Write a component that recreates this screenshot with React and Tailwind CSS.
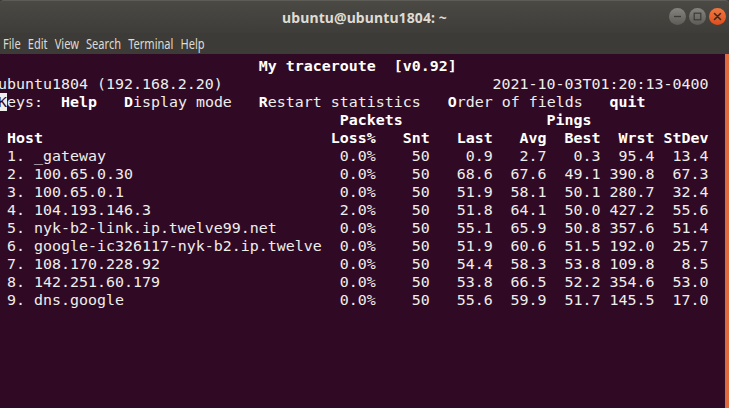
const mono = { fontFamily: '"DejaVu Sans Mono", "Liberation Mono", monospace' }

const hops = [
  ['1', '_gateway', '0.0%', '50', '0.9', '2.7', '0.3', '95.4', '13.4'],
  ['2', '100.65.0.30', '0.0%', '50', '68.6', '67.6', '49.1', '390.8', '67.3'],
  ['3', '100.65.0.1', '0.0%', '50', '51.9', '58.1', '50.1', '280.7', '32.4'],
  ['4', '104.193.146.3', '2.0%', '50', '51.8', '64.1', '50.0', '427.2', '55.6'],
  ['5', 'nyk-b2-link.ip.twelve99.net', '0.0%', '50', '55.1', '65.9', '50.8', '357.6', '51.4'],
  ['6', 'google-ic326117-nyk-b2.ip.twelve', '0.0%', '50', '51.9', '60.6', '51.5', '192.0', '25.7'],
  ['7', '108.170.228.92', '0.0%', '50', '54.4', '58.3', '53.8', '109.8', '8.5'],
  ['8', '142.251.60.179', '0.0%', '50', '53.8', '66.5', '52.2', '354.6', '53.0'],
  ['9', 'dns.google', '0.0%', '50', '55.6', '59.9', '51.7', '145.5', '17.0'],
]

// mtr column layout: host 36, then right-aligned fields
const cols = (a) =>
  a[0].padEnd(36) +
  a[1].padStart(6) +
  a[2].padStart(6) +
  a[3].padStart(7) +
  a[4].padStart(6) +
  a[5].padStart(6) +
  a[6].padStart(6) +
  a[7].padStart(6)

const B = ({ children }) => <span className="font-bold text-white">{children}</span>

const Line = ({ children }) => <div className="h-[18px] leading-[18px] whitespace-pre">{children}</div>

const WinButton = ({ kind }) => {
  if (kind === 'close') {
    return (
      <div className="w-[17px] h-[17px] rounded-full bg-gradient-to-b from-[#f0773f] to-[#df4e1c] flex items-center justify-center">
        <svg width="9" height="9" viewBox="0 0 9 9">
          <path d="M1.5 1.5 L7.5 7.5 M7.5 1.5 L1.5 7.5" stroke="#3a2a22" strokeWidth="1.6" strokeLinecap="round" />
        </svg>
      </div>
    )
  }
  return (
    <div className="w-[17px] h-[17px] rounded-full bg-gradient-to-b from-[#85847e] to-[#5d5c57] flex items-center justify-center">
      <svg width="9" height="9" viewBox="0 0 9 9">
        {kind === 'min' ? (
          <path d="M1 4.5 H8" stroke="#3c3b37" strokeWidth="1.3" />
        ) : (
          <rect x="1.2" y="1.2" width="6.6" height="6.6" fill="none" stroke="#3c3b37" strokeWidth="1.2" />
        )}
      </svg>
    </div>
  )
}

export default function App() {
  return (
    <div className="w-[729px] h-[408px] flex flex-col bg-[#3c3b37] overflow-hidden">
      <div className="h-[33px] relative flex items-center justify-center bg-gradient-to-b from-[#4a4944] to-[#3e3d39] border-t border-[#5d5c57] rounded-t-[4px]">
        <span
          className="text-[14px] font-bold text-[#dfdbd2] tracking-[0.1px]"
          style={{ fontFamily: '"Noto Sans", "Open Sans", sans-serif' }}
        >
          ubuntu@ubuntu1804: ~
        </span>
        <div className="absolute right-[3px] top-[7px] flex gap-[3px]">
          <WinButton kind="min" />
          <WinButton kind="max" />
          <WinButton kind="close" />
        </div>
      </div>
      <div className="h-[21px] flex items-center pl-[3px]">
        <div
          className="flex items-center gap-[9px] text-[14px] text-[#dfdbd2] origin-left scale-x-[0.79]"
          style={{ fontFamily: '"Noto Sans", "Open Sans", sans-serif' }}
        >
          <span>File</span>
          <span>Edit</span>
          <span>View</span>
          <span>Search</span>
          <span>Terminal</span>
          <span>Help</span>
        </div>
      </div>
      <div className="flex-1 flex">
        <div className="flex-1 bg-[#300a24] overflow-hidden pt-[3px]">
          <div className="-ml-[2px] text-[14.95px] text-[#eeeeec]" style={mono}>
            <Line>
              {' '.repeat(29)}
              <B>My traceroute  [v0.92]</B>
            </Line>
            <Line>{'ubuntu1804 (192.168.2.20)'.padEnd(55) + '2021-10-03T01:20:13-0400'}</Line>
            <Line>
              <span className="bg-[#eeeeec] text-[#300a24]">K</span>
              {'eys:  '}
              <B>Help</B>
              {'   '}
              <B>D</B>
              {'isplay mode   '}
              <B>R</B>
              {'estart statistics   '}
              <B>O</B>
              {'rder of fields   '}
              <B>quit</B>
            </Line>
            <Line>
              {' '.repeat(38)}
              <B>Packets</B>
              {' '.repeat(16)}
              <B>Pings</B>
            </Line>
            <Line>
              <B>{cols([' Host', 'Loss%', 'Snt', 'Last', 'Avg', 'Best', 'Wrst', 'StDev'])}</B>
            </Line>
            {hops.map((h) => (
              <Line key={h[0]}>{cols([` ${h[0]}. ${h[1]}`, ...h.slice(2)])}</Line>
            ))}
          </div>
        </div>
        <div className="w-[4px] bg-[#df6a3c]" />
      </div>
    </div>
  )
}
